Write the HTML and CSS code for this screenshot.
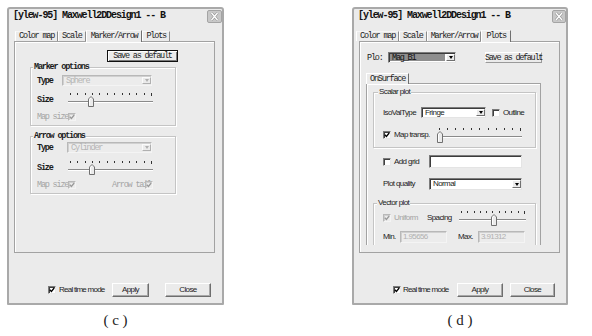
FILE: index.html
```html
<!DOCTYPE html>
<html>
<head>
<meta charset="utf-8">
<link rel="stylesheet" href="styles.css">
</head>
<body>
<div class="page">
  <figure class="fig">
    <div class="dlg dlg-c">
      <div class="titlebar">
        <span class="title">[ylew-95] Maxwell2DDesign1 -- B</span>
        <span class="xbtn"><svg width="15" height="13" viewBox="0 0 15 13"><rect x="0.5" y="0.5" width="14" height="12" rx="1.5" fill="#c8c8c8" stroke="#a4a4a4"/><path d="M4.5 3l6 7M10.5 3l-6 7" stroke="#8a8a8a" stroke-width="2.6"/><path d="M4.5 3l6 7M10.5 3l-6 7" stroke="#fff" stroke-width="1.4"/></svg></span>
      </div>
      <div class="tabs tabs-c">
        <span class="tab mono">Color map</span><span class="tab mono">Scale</span><span class="tab mono active">Marker/Arrow</span><span class="tab mono">Plots</span>
      </div>
      <div class="panel">
        <div class="btn btn-focus mono save-c">Save as default</div>
        <div class="group g-marker">
          <span class="legend mono bold">Marker options</span>
          <div class="row m-type">
            <span class="lbl mono bold w25">Type</span>
            <span class="combo dis w90 h11"><span class="val mono">Sphere</span><span class="drop"></span></span>
          </div>
          <div class="row m-size">
            <span class="lbl mono bold w31">Size</span>
            <div class="slider w85">
              <div class="ticks"><i></i><i></i><i></i><i></i><i></i><i></i><i></i><i></i><i></i><i></i><i></i><i></i></div>
              <div class="track"></div>
              <svg class="thumb" style="left:20px" width="6" height="11" viewBox="0 0 6 11"><path d="M0.5 10.5V3L3 0.5 5.5 3v7.5z" fill="#ebebeb" stroke="#707070"/><path d="M1.5 9.5V3.3L3 1.8" fill="none" stroke="#fff"/></svg>
            </div>
          </div>
          <div class="row m-map">
            <span class="lbl mono grey w31">Map size</span>
            <span class="cb dis"><svg width="6" height="6" viewBox="0 0 6 6"><path d="M0.8 2.8l1.6 1.7L5.2 1" fill="none" stroke="#9a9a9a" stroke-width="1.3"/></svg></span>
          </div>
        </div>
        <div class="group g-arrow">
          <span class="legend mono bold">Arrow options</span>
          <div class="row a-type">
            <span class="lbl mono bold w30">Type</span>
            <span class="combo dis w85 h11"><span class="val mono">Cylinder</span><span class="drop"></span></span>
          </div>
          <div class="row a-size">
            <span class="lbl mono bold w31">Size</span>
            <div class="slider w85">
              <div class="ticks"><i></i><i></i><i></i><i></i><i></i><i></i><i></i><i></i><i></i><i></i><i></i><i></i></div>
              <div class="track"></div>
              <svg class="thumb" style="left:21px" width="6" height="11" viewBox="0 0 6 11"><path d="M0.5 10.5V3L3 0.5 5.5 3v7.5z" fill="#ebebeb" stroke="#707070"/><path d="M1.5 9.5V3.3L3 1.8" fill="none" stroke="#fff"/></svg>
            </div>
          </div>
          <div class="row a-map">
            <span class="lbl mono grey w31">Map size</span>
            <span class="cb dis"><svg width="6" height="6" viewBox="0 0 6 6"><path d="M0.8 2.8l1.6 1.7L5.2 1" fill="none" stroke="#9a9a9a" stroke-width="1.3"/></svg></span>
            <span class="lbl mono grey tail">Arrow tail</span>
            <span class="cb dis"><svg width="6" height="6" viewBox="0 0 6 6"><path d="M0.8 2.8l1.6 1.7L5.2 1" fill="none" stroke="#9a9a9a" stroke-width="1.3"/></svg></span>
          </div>
        </div>
      </div>
      <div class="footer foot-c">
        <span class="cb"><svg width="6" height="6" viewBox="0 0 6 6"><path d="M0.8 2.8l1.6 1.7L5.2 1" fill="none" stroke="#000" stroke-width="1.3"/></svg></span>
        <span class="sans rtm">Real time mode</span>
        <span class="btn sans apply">Apply</span>
        <span class="btn sans close">Close</span>
      </div>
    </div>
    <figcaption class="cap">( c )</figcaption>
  </figure>

  <figure class="fig">
    <div class="dlg dlg-d">
      <div class="titlebar">
        <span class="title">[ylew-95] Maxwell2DDesign1 -- B</span>
        <span class="xbtn"><svg width="14" height="13" viewBox="0 0 14 13"><rect x="0.5" y="0.5" width="13" height="12" rx="1.5" fill="#c8c8c8" stroke="#a4a4a4"/><path d="M4 3l6 7M10 3l-6 7" stroke="#8a8a8a" stroke-width="2.6"/><path d="M4 3l6 7M10 3l-6 7" stroke="#fff" stroke-width="1.4"/></svg></span>
      </div>
      <div class="tabs tabs-d">
        <span class="tab mono">Color map</span><span class="tab mono">Scale</span><span class="tab mono">Marker/Arrow</span><span class="tab mono active">Plots</span>
      </div>
      <div class="panel">
        <div class="row r-plo">
          <span class="lbl mono w21">Plo:</span>
          <span class="combo w68 h11"><span class="val mono sel">Mag_B1</span><span class="drop"></span></span>
          <span class="btn mono save-d">Save as default</span>
        </div>
        <span class="itab mono">OnSurface</span>
        <div class="ipanel">
          <div class="group g-scalar">
            <span class="legend sans">Scalar plot</span>
            <div class="row s-iso">
              <span class="lbl sans w38">IsoValType</span>
              <span class="combo w65 h11"><span class="val sans">Fringe</span><span class="drop"></span></span>
              <span class="cb outline-cb"></span>
              <span class="lbl sans ml3">Outline</span>
            </div>
            <div class="row s-map">
              <span class="cell w54"><span class="cb"><svg width="6" height="6" viewBox="0 0 6 6"><path d="M0.8 2.8l1.6 1.7L5.2 1" fill="none" stroke="#000" stroke-width="1.3"/></svg></span><span class="lbl sans ml3">Map transp.</span></span>
              <div class="slider w85">
                <div class="ticks"><i></i><i></i><i></i><i></i><i></i><i></i><i></i><i></i><i></i><i></i><i></i></div>
                <div class="track"></div>
                <svg class="thumb" style="left:0px" width="6" height="12" viewBox="0 0 6 12"><path d="M0.5 11.5V3L3 0.5 5.5 3v8.5z" fill="#ebebeb" stroke="#707070"/><path d="M1.5 10.5V3.3L3 1.8" fill="none" stroke="#fff"/></svg>
              </div>
            </div>
          </div>
          <div class="row r-grid">
            <span class="cell w46"><span class="cb"></span><span class="lbl sans ml3">Add grid</span></span>
            <span class="field w93 h13"></span>
          </div>
          <div class="row r-pq">
            <span class="cell w46"><span class="lbl sans">Plot quality</span></span>
            <span class="combo w93 h12"><span class="val sans">Normal</span><span class="drop"></span></span>
          </div>
          <div class="group g-vector">
            <span class="legend sans">Vector plot</span>
            <div class="row v-uni">
              <span class="cell w44"><span class="cb dis"><svg width="6" height="6" viewBox="0 0 6 6"><path d="M0.8 2.8l1.6 1.7L5.2 1" fill="none" stroke="#9a9a9a" stroke-width="1.3"/></svg></span><span class="lbl sans grey ml3">Uniform</span></span>
              <span class="cell w32"><span class="lbl sans">Spacing</span></span>
              <div class="slider w67">
                <div class="ticks"><i></i><i></i><i></i><i></i><i></i><i></i><i></i><i></i><i></i><i></i><i></i></div>
                <div class="track"></div>
                <svg class="thumb" style="left:32px" width="6" height="12" viewBox="0 0 6 12"><path d="M0.5 11.5V3L3 0.5 5.5 3v8.5z" fill="#ebebeb" stroke="#707070"/><path d="M1.5 10.5V3.3L3 1.8" fill="none" stroke="#fff"/></svg>
              </div>
            </div>
            <div class="row v-min">
              <span class="cell w17"><span class="lbl sans">Min.</span></span>
              <span class="field dis w47 h12 sans">1.95656</span>
              <span class="cell w20 ml11"><span class="lbl sans">Max.</span></span>
              <span class="field dis w47 h12 sans">3.91312</span>
            </div>
          </div>
        </div>
      </div>
      <div class="footer foot-d">
        <span class="cb"><svg width="6" height="6" viewBox="0 0 6 6"><path d="M0.8 2.8l1.6 1.7L5.2 1" fill="none" stroke="#000" stroke-width="1.3"/></svg></span>
        <span class="sans rtm">Real time mode</span>
        <span class="btn sans apply">Apply</span>
        <span class="btn sans close">Close</span>
      </div>
    </div>
    <figcaption class="cap">( d )</figcaption>
  </figure>
</div>
</body>
</html>
```

FILE: styles.css
```css
* { box-sizing: border-box; margin: 0; padding: 0; }
html, body { background: #fff; }
body {
  width: 592px; height: 336px; overflow: hidden;
  font-family: "Liberation Sans", Arial, sans-serif;
  color: #1c1c1c;
}
.page { display: flex; gap: 128px; padding: 7px 0 0 7px; }
.fig { display: flex; flex-direction: column; align-items: center; }
.cap { margin-top: 7px; font: 15px/16px "Liberation Serif", serif; color: #222; }

.mono { font-family: "Liberation Mono", "DejaVu Sans Mono", monospace; font-size: 8.5px; letter-spacing: -1.2px; line-height: 10px; }
.sans { font-family: "Liberation Sans", Arial, sans-serif; font-size: 8px; letter-spacing: -0.6px; line-height: 10px; }
.bold { font-weight: bold; }
.grey { color: #a4a4a4; }

.dlg {
  width: 217px; height: 298px; background: #ebebeb;
  border: 2px solid #a9a9a9; border-radius: 3px 3px 1px 1px;
  display: flex; flex-direction: column;
}
.dlg-d { width: 216px; }

.titlebar { height: 19px; flex: none; display: flex; justify-content: space-between; align-items: flex-start; padding: 1px 0 0 4px; }
.title { font: bold 10px/12px "Liberation Mono", monospace; letter-spacing: -1.1px; color: #111; white-space: nowrap; }
.xbtn { display: flex; }

.tabs { height: 13px; flex: none; display: flex; align-items: flex-end; }
.tabs-c { padding-left: 6px; }
.tabs-d { padding-left: 2px; }
.tab {
  height: 10px; padding: 0 3px; line-height: 9px; color: #222; white-space: nowrap;
  border-left: 1px solid #fff; border-right: 1px solid #8c8c8c; border-top: 1px solid #f6f6f6;
}
.tab.active { height: 12px; margin-bottom: -1px; position: relative; z-index: 1; background: #ebebeb; border-right-color: #707070; padding: 1px 4px 0; }

.panel {
  flex: none; margin-left: 5px; width: 201px; height: 212px;
  border: 1px solid #a2a2a2; box-shadow: inset 1px 1px 0 #fff;
}

.btn {
  display: flex; align-items: center; justify-content: center; flex: none; white-space: nowrap;
  background: #ebebeb; border: 1px solid; border-color: #fff #6e6e6e #6e6e6e #fff;
  box-shadow: inset -1px -1px 0 #a8a8a8; color: #1c1c1c;
}
.btn-focus { border: 1px solid #111; box-shadow: inset 1px 1px 0 #fff, inset -1px -1px 0 #7a7a7a, inset 2px 2px 0 #ebebeb, inset -2px -2px 0 #ebebeb; }
.save-c { margin: 8px 0 0 92px; width: 71px; height: 12px; }
.save-d { margin-left: 29px; width: 57px; height: 11px; letter-spacing: -1.3px; border-color: #fff #9a9a9a #9a9a9a #fff; box-shadow: none; }

.group { position: relative; border: 1px solid #c4c4c4; box-shadow: 1px 1px 0 #fff, inset 1px 1px 0 #fff; flex: none; }
.legend { position: absolute; top: -6px; left: 2px; background: #ebebeb; padding: 0 1px; white-space: nowrap; }
.g-marker { margin: 5px 0 0 15px; width: 146px; height: 59px; }
.g-arrow { margin: 10px 0 0 15px; width: 146px; height: 58px; }

.row { display: flex; align-items: center; }
.lbl { white-space: nowrap; flex: none; }
.cell { display: flex; align-items: center; flex: none; }
.ml3 { margin-left: 3px; }
.ml11 { margin-left: 11px; }
.w17 { width: 17px; } .w20 { width: 20px; } .w21 { width: 21px; } .w25 { width: 25px; } .w30 { width: 30px; } .w31 { width: 31px; }
.w32 { width: 32px; } .w38 { width: 38px; } .w44 { width: 44px; } .w46 { width: 46px; } .w47 { width: 47px; } .w54 { width: 54px; }
.w65 { width: 65px; } .w67 { width: 67px; } .w68 { width: 68px; } .w85 { width: 85px; } .w90 { width: 90px; } .w93 { width: 93px; }
.h10 { height: 10px; } .h11 { height: 11px; } .h12 { height: 12px; } .h13 { height: 13px; }

.m-type { margin-top: 7px; height: 11px; padding-left: 6px; }
.m-size { margin-top: 6px; height: 16px; padding-left: 6px; }
.m-map { margin-top: 5px; height: 8px; padding-left: 6px; }
.a-type { margin-top: 5px; height: 11px; padding-left: 6px; }
.a-size { margin-top: 7px; height: 16px; padding-left: 6px; }
.a-map { margin-top: 5px; height: 8px; padding-left: 6px; }
.tail { width: 36px; margin-left: 36px; }
.a-map .cb:last-child { margin-left: -3px; }

.combo {
  display: flex; flex: none; background: #fff;
  border: 1px solid; border-color: #7c7c7c #e4e4e4 #e4e4e4 #7c7c7c;
  box-shadow: inset 1px 1px 0 #3c3c3c;
}
.combo .val { flex: 1; padding-left: 3px; white-space: nowrap; display: flex; align-items: center; line-height: 8px; }
.combo .val.sel { background: #8e8e8e; color: #111; margin: 1px 1px 1px 1px; padding-left: 2px; }
.combo .drop {
  width: 9px; flex: none; background: #ebebeb; display: flex; align-items: center; justify-content: center;
  margin: 1px 0; border: 1px solid; border-color: #fff #707070 #707070 #fff;
}
.combo .drop::after { content: ""; width: 0; height: 0; border-left: 2.5px solid transparent; border-right: 2.5px solid transparent; border-top: 3px solid #000; }
.combo.dis { background: #ececec; color: #b4b4b4; border-color: #b8b8b8 #f4f4f4 #f4f4f4 #b8b8b8; box-shadow: inset 1px 1px 0 #d0d0d0; }
.combo.dis .drop { border-color: #fbfbfb #b0b0b0 #b0b0b0 #fbfbfb; }
.combo.dis .drop::after { border-top-color: #b0b0b0; }

.slider { position: relative; height: 16px; flex: none; }
.ticks { position: absolute; top: 1px; left: 2px; right: 1px; height: 2px; display: flex; justify-content: space-between; }
.ticks i { display: block; width: 1px; height: 2px; background: #333; }
.ticks i:last-child { height: 3px; }
.track { position: absolute; top: 9px; left: 0; right: 0; height: 2px; border-top: 1px solid #8a8a8a; border-bottom: 1px solid #fff; }
.thumb { position: absolute; top: 4px; }

.cb {
  width: 8px; height: 8px; flex: none; background: #fff; display: flex; align-items: center; justify-content: center;
  border: 1px solid; border-color: #7a7a7a #e8e8e8 #e8e8e8 #7a7a7a; box-shadow: inset 1px 1px 0 #404040;
  position: relative;
}
.cb.dis { background: #ececec; border-color: #b8b8b8 #f4f4f4 #f4f4f4 #b8b8b8; box-shadow: inset 1px 1px 0 #cfcfcf; }
.outline-cb { margin-left: 6px; }

.field {
  flex: none; background: #fff; display: flex; align-items: center; padding-left: 2px;
  border: 1px solid; border-color: #7c7c7c #e4e4e4 #e4e4e4 #7c7c7c; box-shadow: inset 1px 1px 0 #3c3c3c;
}
.field.dis { background: #ececec; color: #b0b0b0; border-color: #b8b8b8 #f4f4f4 #f4f4f4 #b8b8b8; box-shadow: inset 1px 1px 0 #d0d0d0; }

.r-plo { margin-top: 10px; height: 11px; padding-left: 7px; }
.itab {
  display: block; position: relative; z-index: 1; margin: 10px 0 -1px 6px; width: 43px; height: 11px;
  background: #ebebeb; padding: 1px 0 0 3px; line-height: 9px;
  border: 1px solid; border-bottom: none; border-color: #fff #707070 #707070 #fff;
}
.ipanel {
  margin-left: 6px; width: 175px; height: 162px; overflow: hidden;
  border: 1px solid #a2a2a2; border-bottom: none; box-shadow: inset 1px 1px 0 #fff;
}
.g-scalar { margin: 8px 0 0 6px; width: 163px; height: 56px; }
.g-vector { margin: 13px 0 0 6px; width: 163px; height: 62px; }
.g-scalar .legend { left: 4px; }
.g-vector .legend { left: 3px; }
.s-iso { margin-top: 14px; height: 11px; padding-left: 9px; }
.s-map { margin-top: 9px; height: 16px; padding-left: 9px; }
.r-grid { margin: 7px 0 0 16px; height: 13px; }
.r-pq { margin: 10px 0 0 16px; height: 12px; }
.v-uni { margin-top: 6px; height: 16px; padding-left: 9px; }
.v-min { margin-top: 5px; height: 12px; padding-left: 9px; }

.footer { display: flex; align-items: center; padding: 30px 0 0 39px; flex: none; }
.footer > * { height: 14px; }
.footer .cb { height: 8px; }
.rtm { display: flex; align-items: center; white-space: nowrap; letter-spacing: -0.75px; }
.foot-c .rtm { margin-left: 3px; width: 45px; }
.foot-c .apply { margin-left: 8px; width: 37px; }
.foot-c .close { margin-left: 16px; width: 46px; }
.foot-d .rtm { margin-left: 2px; width: 47px; }
.foot-d .apply { margin-left: 7px; width: 46px; }
.foot-d .close { margin-left: 7px; width: 45px; }
```
